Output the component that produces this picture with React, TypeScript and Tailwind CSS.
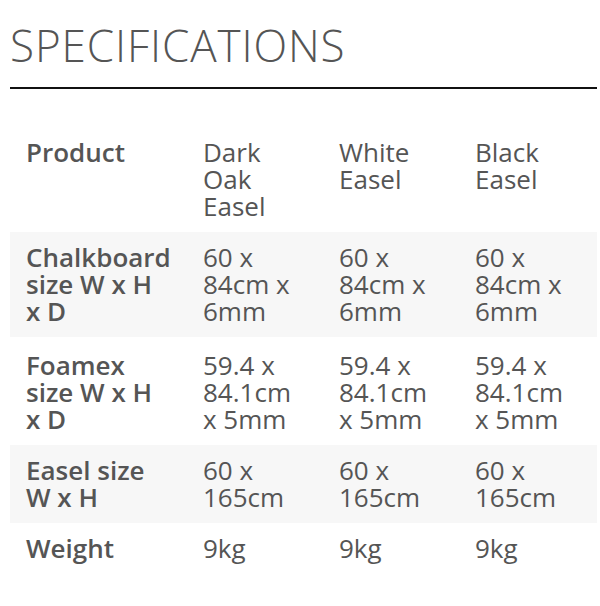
const rows = [
  { label: "Product", values: ["Dark Oak Easel", "White Easel", "Black Easel"], shaded: false, pad: "pt-3" },
  { label: "Chalkboard size W x H x D", values: ["60 x 84cm x 6mm", "60 x 84cm x 6mm", "60 x 84cm x 6mm"], shaded: true, pad: "pt-3" },
  { label: "Foamex size W x H x D", values: ["59.4 x 84.1cm x 5mm", "59.4 x 84.1cm x 5mm", "59.4 x 84.1cm x 5mm"], shaded: false, pad: "pt-[15px]" },
  { label: "Easel size W x H", values: ["60 x 165cm", "60 x 165cm", "60 x 165cm"], shaded: true, pad: "pt-3" },
  { label: "Weight", values: ["9kg", "9kg", "9kg"], shaded: false, pad: "pt-3" },
];

export default function App() {
  return (
    <div className="w-[600px] h-[606px] bg-white px-[10px] pt-[19px] text-[#555] font-['Open_Sans',sans-serif] overflow-hidden">
      <h2 className="text-[44px] leading-[52px] font-light tracking-[0.9px]">SPECIFICATIONS</h2>
      <div className="mt-[16px] h-[2px] w-[587px] bg-[#111]" />
      <table className="mt-[38px] w-[587px] table-fixed border-collapse">
        <colgroup>
          <col className="w-[177px]" />
          <col className="w-[136px]" />
          <col className="w-[136px]" />
          <col className="w-[138px]" />
        </colgroup>
        <tbody>
          {rows.map((row) => (
            <tr key={row.label} className={row.shaded ? "bg-[#f7f7f7]" : ""}>
              <th className={`px-4 pb-3 ${row.pad} text-left align-top text-[26px] leading-[27px] font-semibold`}>{row.label}</th>
              {row.values.map((v, i) => (
                <td key={i} className={`px-4 pb-3 ${row.pad} align-top text-[26px] leading-[27px] font-normal`}>{v}</td>
              ))}
            </tr>
          ))}
        </tbody>
      </table>
    </div>
  );
}
